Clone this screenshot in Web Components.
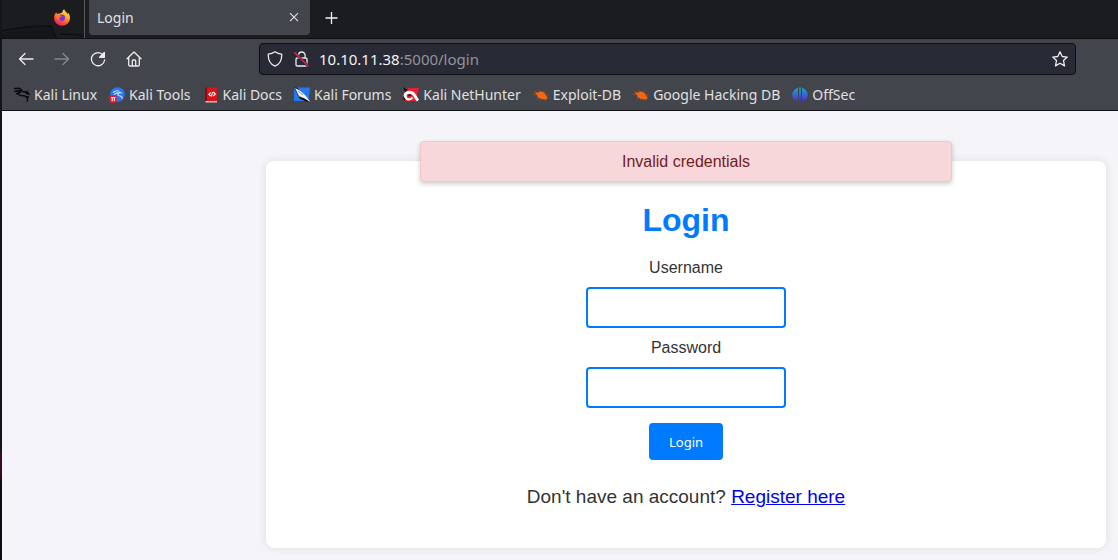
<!DOCTYPE html>
<html lang="en">
<head>
<meta charset="utf-8">
<title>Login</title>
<style>
html,body{margin:0;min-height:100%}
body{min-height:100vh;background:#f4f4f9;font-family:"Liberation Sans",Arial,sans-serif;font-size:16px;color:#333}
</style>
</head>
<body>
<app-window>
  <tab-strip slot="chrome">Login</tab-strip>
  <nav-bar slot="chrome" host="10.10.11.38" path=":5000/login"></nav-bar>
  <bookmark-bar slot="chrome">
    <book-mark icon="kali">Kali Linux</book-mark>
    <book-mark icon="tools">Kali Tools</book-mark>
    <book-mark icon="docs">Kali Docs</book-mark>
    <book-mark icon="forums">Kali Forums</book-mark>
    <book-mark icon="nethunter">Kali NetHunter</book-mark>
    <book-mark icon="bug">Exploit-DB</book-mark>
    <book-mark icon="bug">Google Hacking DB</book-mark>
    <book-mark icon="offsec">OffSec</book-mark>
  </bookmark-bar>
  <login-card>
    <flash-message slot="flash">Invalid credentials</flash-message>
  </login-card>
</app-window>
<script>
const define = (name, html, setup) => {
  const tpl = document.createElement('template');
  tpl.innerHTML = html;
  customElements.define(name, class extends HTMLElement {
    constructor() {
      super();
      this.attachShadow({mode: 'open'}).append(tpl.content.cloneNode(true));
    }
    connectedCallback() { if (setup) setup(this, this.shadowRoot); }
  });
};

define('app-window', `
<style>
:host{display:block;box-sizing:border-box;min-height:100vh;border-left:2px solid #0c0d18;
  border-image:linear-gradient(#14151b 0 80%,#3a0a20 81% 85%,#0c0d18 86%) 1}
header{font-family:"Noto Sans",sans-serif;font-size:14px;color:#e0e0e0}
main{padding:50px 12px 12px 264px}
</style>
<header><slot name="chrome"></slot></header>
<main><slot></slot></main>`);

define('tab-strip', `
<style>
:host{display:flex;height:38px;background:#1b1c20;border-bottom:1px solid #0f1013}
button{all:unset;display:grid;place-items:center}
.pin{position:relative;width:82px;border-right:1px solid #55575c;box-sizing:content-box;display:flex;align-items:center;justify-content:flex-end}
.art{position:absolute;left:0;bottom:0}
.fox{position:relative;margin:0 14px 4px 0}
.tab{display:flex;align-items:center;justify-content:space-between;box-sizing:border-box;width:221px;height:35px;margin-left:4px;padding:0 8px;background:#42454c;border-radius:0 0 4px 4px}
.new{width:44px;height:35px}
</style>
<div class="pin">
  <svg class="art" width="82" height="38" viewBox="0 0 82 38" fill="none" stroke="#101114" stroke-width="2"><path d="M0 31q24-5 49-5l5 12M0 36q24-4 47-5l6 7M58 34q14 0 24 2"/><path d="M0 33q24-5 48-5l5 10H0z" fill="#15161a" stroke="none"/></svg>
  <svg class="fox" width="16" height="17" viewBox="0 0 16 17">
    <defs><linearGradient id="f" x1=".85" y1="0" x2=".25" y2="1"><stop stop-color="#fff04a"/><stop offset=".35" stop-color="#ffb02a"/><stop offset=".65" stop-color="#ff5a30"/><stop offset="1" stop-color="#e3195e"/></linearGradient></defs>
    <path fill="url(#f)" d="M2.200 3.200C1 4.700 0 6.500 0 9a8 7.800 0 0 0 16 0c0-3-1.200-4.500-2.200-5.400.3.8.4 1.400.3 1.900C13 3 10.800 2.800 10.200.2 8.600 1 8.200 2.600 8.300 3.800c-1.300 0-2 .5-2.600.9C4.700 4.300 3.900 4.500 3.400 4.900 2.800 4.500 2.300 4 2.200 3.200z"/>
    <circle cx="7.700" cy="8.800" r="3.300" fill="#7a35d8"/><path d="M2 6.500c2-1.500 3.800-.8 5.800.8-1 .9-2 .7-2.500 1.500-.4.800.1 2 1.500 2.500C3.900 12 2 9.500 2 6.500z" fill="#ff7a2c"/>
  </svg>
</div>
<div class="tab"><span><slot></slot></span>
  <button aria-label="Close tab"><svg width="16" height="16" viewBox="0 0 16 16" stroke="#e2e2e2" stroke-width="1.100"><path d="M4 3.200l8 8M12 3.200l-8 8"/></svg></button>
</div>
<button class="new" aria-label="New tab"><svg width="16" height="16" viewBox="0 0 16 16" stroke="#f2f2f2" stroke-width="1.300"><path d="M7.500 2v12M1.500 8h12"/></svg></button>`);

define('nav-bar', `
<style>
:host{display:flex;align-items:center;height:40px;background:#42454c;padding:0 42px 0 6px}
button{all:unset;display:grid;place-items:center;width:36px;height:32px}
svg{display:block;fill:none;stroke:#ececec;stroke-width:1.300;stroke-linecap:round;stroke-linejoin:round}
button:disabled svg{stroke:#85878b}
nav{display:flex;width:251px}
.url{display:flex;flex:1;align-items:center;gap:10px;box-sizing:border-box;height:32px;border:1px solid #0e0f13;border-radius:4px;background:#282a36;padding:0 7px}
.address{flex:1;font-size:15px;line-height:20px;color:#929399}
b{font-weight:400;color:#f4f4f4}
.url button{width:16px}
</style>
<nav>
<button aria-label="Back"><svg width="16" height="16" viewBox="0 0 16 16"><path d="M15 8H1.500M7 2.500L1.500 8 7 13.500"/></svg></button>
<button aria-label="Forward" disabled><svg width="16" height="16" viewBox="0 0 16 16"><path d="M1 8h13.500M9 2.500L14.500 8 9 13.500"/></svg></button>
<button aria-label="Reload"><svg width="16" height="16" viewBox="0 0 16 16"><path d="M13.200 4A6.600 6.600 0 1 0 14.600 9"/><path d="M14.400 1.500v4.800H9.600z" fill="#ececec"/></svg></button>
<button aria-label="Home"><svg width="16" height="16" viewBox="0 0 16 16"><path d="M1 7.700L8 1l7 6.700M2.700 6.500v7.300q0 1.200 1.200 1.200h8.200q1.200 0 1.200-1.200V6.500M6.300 15v-5q0-1 1-1h1.400q1 0 1 1v5"/></svg></button>
</nav>
<div class="url">
<button aria-label="Tracking protection"><svg width="16" height="16" viewBox="0 0 16 16"><path d="M8 .8Q11 3 14.700 3.200C15 9 13 13.200 8 15.200 3 13.200 1 9 1.300 3.200Q5 3 8 .8z"/></svg></button>
<button aria-label="Connection not secure"><svg width="16" height="16" viewBox="0 0 16 16"><path d="M5.500 7V4.300a3.300 3.300 0 0 1 6.600 0V7M4.300 7h8.400q1.300 0 1.300 1.300v5.400q0 1.300-1.300 1.300H4.300Q3 15 3 13.700V8.300Q3 7 4.300 7z"/><path d="M2 2l13 13" stroke="#282a36" stroke-width="2.800"/><path d="M1.800 1.800L15 15" stroke="#e22850" stroke-width="1.300"/></svg></button>
<span class="address"><b></b><span class="path"></span></span>
<button aria-label="Bookmark this page"><svg width="16" height="16" viewBox="0 0 16 16"><path d="M8 .8l2.200 4.700 5.100.6-3.800 3.500 1 5.300L8 12.300l-4.500 2.600 1-5.300L.7 6.100l5.100-.6z"/></svg></button>
</div>`, (el, root) => {
  root.querySelector('b').textContent = el.getAttribute('host');
  root.querySelector('.path').textContent = el.getAttribute('path');
});

define('bookmark-bar', `
<style>:host{display:flex;gap:12px;align-items:center;height:31px;padding-left:12px;background:#42454c;border-bottom:1px solid #111216}</style>
<slot></slot>`);

const dragon = '<path d="M0 1.500l5-.3 3 1.600M.5 4.500l6-1.200 3 1.500M2 7l5-2M6 3.500C2.500 7 5.500 9 9 8.700s5 2.800 4.300 6M9 5l4-.3 2 2.300-3-.7M10 9l5 1.300"/>';
const icons = {
  kali: `<g fill="none" stroke="#09090b" stroke-width="1.400">${dragon}</g>`,
  tools: `<circle cx="8.500" cy="7.500" r="7.300" fill="#2777f3"/><path d="M4 5.500q3-2.500 6-1.500M5 7.500q2.500-2 5-1.500-2.500 2 .5 2.700t2.700 3M10 5l3 1.200" fill="none" stroke="#cfe3ff" stroke-width="1.100"/><circle cx="4" cy="12" r="4" fill="#e8192c"/><path d="M2 10.500h4.500M3.200 10.500v3.700M5.300 10.500v3.700" stroke="#fff" stroke-width="1" fill="none"/>`,
  docs: `<path fill="#8d090d" d="M2 .5h3v14H2z"/><path fill="#dc1317" d="M4 .5h10v13.500H4z"/><path fill="#f3b9b5" d="M2.500 14H14v1.500H2.500z"/><path d="M7.700 5.500L5.900 7.200l1.800 1.800M10.300 5l2 2-2 2M9.500 5L8.500 9.500" fill="none" stroke="#fff" stroke-width="1.100"/>`,
  forums: `<path fill="#2378f2" d="M0 .5h16L14.500 14H0z"/><path fill="#111" d="M0 .5h3l12.500 13-2 1.500L6 12z"/><path fill="#f7f4ec" d="M1 1l5 2.500 5 4.500 4.500 5.500v1L9.700 11 5 9.500 3.500 6z"/><path d="M4 4l5 4M3 8l4 2" stroke="#444" stroke-width=".6"/>`,
  nethunter: `<path fill="#ec1d32" d="M5 1h11l-2 8v5H1V9z"/><path d="M0 0l3 2 2 1-3 2zM1 14l-1-5 4 2z" fill="#111"/><path d="M2.500 10C1 6.500 5 4.500 8.500 5.500c3.500 1 3 4.500 6.500 8" fill="none" stroke="#fff" stroke-width="3"/><path d="M2.500 9c0 4 5 4.500 7 1.500" fill="none" stroke="#fff" stroke-width="2.200"/><path d="M5 8.500l3-.5" stroke="#222" stroke-width="1.500"/>`,
  bug: `<path d="M3 6l-2-2.500M7 5L5 2.500M10 5l1.500-1.500M13 8l2.500-.2M5 10l-1 2.500M3 8L0 7M8 11l-1 2.500M11.500 12l1 2" stroke="#a94d20" stroke-width=".9" fill="none"/><path d="M2 5.300l3.500.3 2-1.300 4 1.400 1.300 2.600 2 2.500-1.300 1.700-4.500-.2-4-1.700-1.500-3z" fill="#f26511"/>`,
  offsec: `<defs><linearGradient id="o" gradientUnits="userSpaceOnUse" x1="0" y1="0" x2="0" y2="15"><stop stop-color="#16a9c4"/><stop offset=".45" stop-color="#2d73cf"/><stop offset="1" stop-color="#6020cc"/></linearGradient></defs><g fill="url(#o)"><path d="M6 .8v10.700q-1 2.500-3 2C-.8 10.500-1.300 3.500 6 .8zM10 .8v10.700q1 2.500 3 2C16.800 10.500 17.300 3.500 10 .8z"/><path d="M7.200.5h1.600v15H7.200z"/></g>`
};
define('book-mark', `
<style>
:host{display:block}
a{display:flex;align-items:center;gap:4px;color:inherit;text-decoration:none;white-space:nowrap;line-height:20px}
svg{display:block}
</style>
<a href="#"><svg width="16" height="16" viewBox="0 0 16 16" aria-hidden="true"></svg><span><slot></slot></span></a>`,
(el, root) => { root.querySelector('svg').innerHTML = icons[el.getAttribute('icon')]; });

define('flash-message', `
<style>:host{display:block;box-sizing:border-box;padding:10px 20px;border:1px solid #f5c6cb;border-radius:4px;background:#f8d7da;color:#721c24;line-height:19px;text-align:center;box-shadow:0 2px 5px rgba(0,0,0,.2)}</style>
<slot></slot>`);

define('form-field', `
<style>
:host{display:flex;flex-direction:column;align-items:center;gap:10px}
label{line-height:18px}
input{box-sizing:border-box;width:200px;height:41px;margin:0;padding:10px;border:2px solid #007bff;border-radius:4px;background:#fff;font:inherit}
</style>
<label for="field"><slot></slot></label><input id="field">`, (el, root) => {
  root.querySelector('input').type = el.getAttribute('type');
});

define('login-card', `
<style>
:host{display:block;position:relative;padding:41px 40px 40px;border-radius:8px;background:#fff;box-shadow:0 0 10px rgba(0,0,0,.1);text-align:center}
.flash{position:absolute;top:-20px;left:50%;width:532px;max-width:100%;transform:translateX(-50%)}
h1{margin:0 0 20px;font-size:32px;line-height:37px;color:#007bff}
form{display:flex;flex-direction:column;align-items:center;gap:11px}
button{height:37px;margin-top:4px;padding:0 20px;border:0;border-radius:4px;background:#007bff;color:#fff;font:13px "Noto Sans",sans-serif}
p{margin:26px 0 0;font-size:19px;line-height:22px}
a{color:#0000ee}
</style>
<div class="flash"><slot name="flash"></slot></div>
<h1>Login</h1>
<form>
<form-field type="text">Username</form-field>
<form-field type="password">Password</form-field>
<button type="submit">Login</button>
</form>
<p>Don't have an account? <a href="#">Register here</a></p>`);
</script>
</body>
</html>
